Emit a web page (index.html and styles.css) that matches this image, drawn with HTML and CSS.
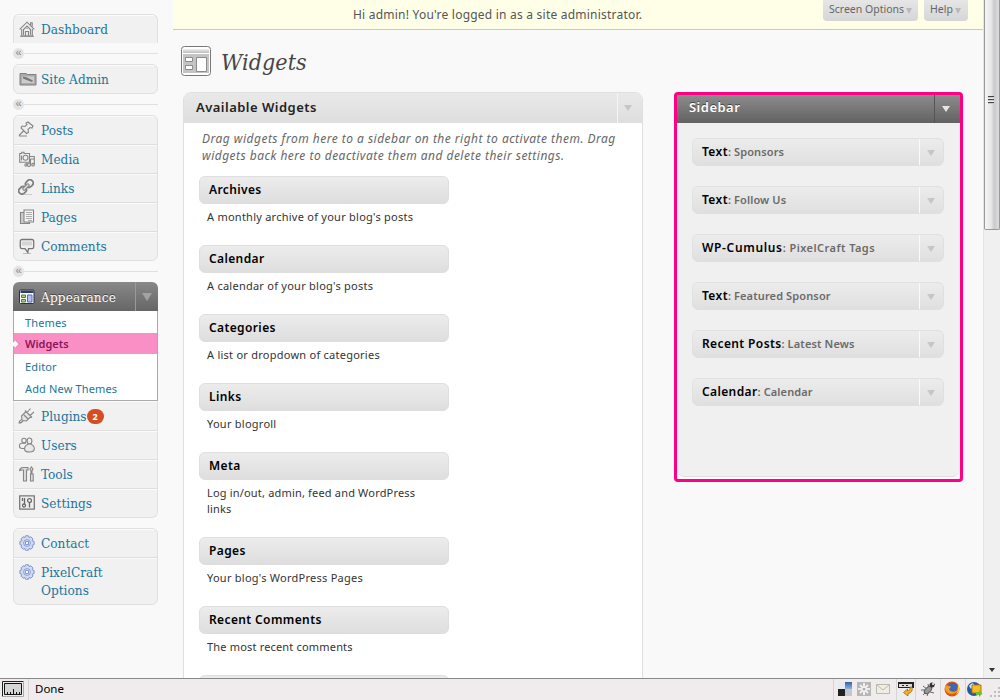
FILE: index.html
```html
<!DOCTYPE html>
<html lang="en">
<head>
<meta charset="utf-8">
<title>Widgets</title>
<link rel="stylesheet" href="styles.css">
</head>
<body>
<div class="window">
  <div class="viewport">
    <nav class="menu">
      <div class="group open-end"><a class="item"><svg class="icon" viewBox="0 0 16 16"><path class="ln" d="M.7 8.3 8 1.2l7.3 7.1M2.7 8v7h10.6V8M11.6 4V1.7h1.6v4M4.5 14V8.5L8 5l3.5 3.5V14"/><path class="ln" d="M6.5 15v-4.5h3V15M8 7v1"/><path class="ln" d="M1 15.2h14"/></svg>Dashboard</a></div>
      <div class="sep"><span>«</span></div>
      <div class="group"><a class="item"><svg class="icon wide" viewBox="0 0 18 16"><path class="pic" d="M1 3.500V2.500h6L8.500 3.500H17v10.500H1z"/><path d="M3 5.500h12v6.500H3z" fill="#ccc"/><path d="m4 5.500 4 1 6 3-1 1.500-4-1.500-5-2z" fill="#777"/></svg>Site Admin</a></div>
      <div class="sep"><span>«</span></div>
      <div class="group">
        <a class="item"><svg class="icon up" viewBox="0 0 16 16"><path class="ln" d="m8 2 2-1 5 4-1 2-2-.5-2 2 .5 3-2 1L3 7l1-2 3 .5 2-2zM5.500 10 1 14.500M1 15h8" fill="#eee"/></svg>Posts</a>
        <a class="item"><svg class="icon" viewBox="0 0 16 16"><path class="ln" d="M.7 2.500h2V1.200H5v1.300h5.500v8.800H.7z"/><circle class="ln" cx="6.500" cy="6.700" r="2.500"/><path class="ln" d="M2.500 4.500v5M10.500 5.500h4.800v8.300M11.500 8h3.500M11.500 8v6M8 12v3"/><circle class="ln" cx="10" cy="14" r="1.500"/><circle class="ln" cx="14" cy="13.700" r="1.300"/><circle class="ln" cx="7" cy="14" r="1.200"/></svg>Media</a>
        <a class="item"><svg class="icon left up" viewBox="0 0 16 16"><g transform="rotate(-45 8 8)"><rect class="link-o" x="-.8" y="4.700" width="8" height="6.500" rx="3.200"/><rect class="link-o" x="8.800" y="4.700" width="8" height="6.500" rx="3.200"/><rect class="ln" x="4" y="6.700" width="8" height="2.600" rx="1.300" fill="#ddd"/></g><path d="M6 15.500h8" stroke="#ccc"/></svg>Links</a>
        <a class="item"><svg class="icon" viewBox="0 0 16 16"><path class="ln" d="M5 3.500H1.500v11h9V12" fill="#ccc"/><path class="ln" d="M5 1h9.500v12H5z" fill="#f6f6f6"/><path d="M7 3.500h6M7 5.500h6M7 7.500h6M7 9.500h6M9 11.500h4" stroke="#aaa"/></svg>Pages</a>
        <a class="item"><svg class="icon" viewBox="0 0 16 16"><path d="M4 15.500h8" stroke="#bbb"/><path d="M3 1.500h10a1.700 1.700 0 0 1 1.700 1.700V9A1.700 1.700 0 0 1 13 10.700H9.500L8.800 14.500 6 10.700H3A1.700 1.700 0 0 1 1.300 9V3.200A1.700 1.700 0 0 1 3 1.500z" fill="#f0f0f0" stroke="#777" stroke-width="1.300"/><path d="M3 3.500h10v4H3z" fill="#d5d5d5"/></svg>Comments</a>
      </div>
      <div class="sep"><span>«</span></div>
      <div class="group tall">
        <a class="item current"><svg class="icon" viewBox="0 0 16 16"><rect x=".5" y="1" width="14.500" height="13.500" rx="1" fill="#fff" stroke="#26304f"/><path d="M1.500 1.500h13V4h-13z" fill="#2f3d66"/><path d="M2.500 6h4v2.500h-4zM2.500 10.500h4V13h-4z" fill="#a6d388" stroke="#4e7a3e"/><path d="M8.500 6h4.500v7H8.500z" fill="#b5c1f2" stroke="#5968ad"/></svg>Appearance<i class="toggle"></i></a>
        <div class="submenu"><a>Themes</a><a class="active">Widgets</a><a>Editor</a><a>Add New Themes</a></div>
        <a class="item after"><svg class="icon left" viewBox="0 0 16 16"><path class="ln" d="M1 15c0-3 2-3 3-3.500L3.500 8 8 3.500l5 5L8.500 13l-3.500-.5C4 15 3 15 1 15zM9 4.500l3.500-4M12 7.500l4-3.500M7 2.500l7 7M6 7l4 4" fill="#e5e5e5"/></svg>Plugins<b class="count">2</b></a>
        <a class="item"><svg class="icon" viewBox="0 0 16 16"><circle class="ln" cx="5" cy="3.500" r="2.200"/><path class="ln" d="M6.500 11.500H3A2.500 2.500 0 0 1 3 6.200h4"/><ellipse class="ln" cx="10.500" cy="4" rx="2.400" ry="3" fill="#eee"/><path class="ln" d="M10.500 7C13 7 15.500 9 15.300 12S12 15 10.500 15s-5 0-5-3S8 7 10.500 7z" fill="#e8e8e8"/></svg>Users</a>
        <a class="item"><svg class="icon" viewBox="0 0 16 16"><path class="ln" d="M.5 4.500C1 2.500 2 1.500 4 1.500h5V4H7.500v11h-3V4H3zM12.500 1 14 3l-1 2v3h-1V5l-1-2zM11.500 8h2.700v7h-2.700z" fill="#ddd"/></svg>Tools</a>
        <a class="item"><svg class="icon" viewBox="0 0 16 16"><path d="M.7.8h14.600v13.400H.7z" fill="#eee" stroke="#777" stroke-width="1.300"/><path d="M5.500 3v6M3.500 3v3M10.500 8v4.500" stroke="#666" stroke-width="1.300"/><circle cx="5" cy="10.500" r="1.500" class="dk"/><circle cx="10.500" cy="5.500" r="1.900" class="dk"/></svg>Settings</a>
      </div>
      <div class="group extra">
        <a class="item"><svg class="icon" viewBox="0 0 16 16"><use href="#gear"/></svg>Contact</a>
        <a class="item two"><svg class="icon" viewBox="0 0 16 16"><g id="gear"><path d="M6.500.8h3l.6 1.700 1.800-.7 2.100 2.100-.8 1.800 1.900.8v3l-1.900.8.8 1.800-2.100 2.100-1.800-.7-.6 1.700h-3l-.6-1.700-1.800.7L2 12.100l.8-1.800-1.900-.8v-3l1.900-.8L2 3.900l2.100-2.100 1.800.7z" fill="#cfdaf5" stroke="#8093c6"/><circle cx="8" cy="8" r="3.400" fill="#dbe4f8" stroke="#8a9bcb"/><path d="M6.500 6.500h3v3h-3z" fill="#fff" stroke="#8496c4"/></g></svg><span>PixelCraft<br>Options</span></a>
      </div>
    </nav>
    <main class="content">
      <header class="banner"><p>Hi admin! You're logged in as a site administrator.</p>
        <div class="tabs"><a class="screen">Screen Options<i></i></a><a class="help">Help<i></i></a></div></header>
      <div class="title"><svg viewBox="0 0 32 32"><defs><linearGradient id="g" x2="0" y2="1"><stop stop-color="#eee"/><stop offset="1" stop-color="#bbb"/></linearGradient></defs><rect x="1.500" y="1.500" width="29" height="29" rx="3" fill="#fff" stroke="#777"/><path d="M3 4h26v4H3z" fill="url(#g)"/><path d="M3 9h26v19H3z" fill="#c4c4c4"/><path d="M5.500 12.500h7v4h-7zM5.500 20.500h7v4h-7zM16.500 12.500h10v14h-10z" fill="#fff" stroke="#8c8c8c"/></svg><h1>Widgets</h1></div>
      <div class="columns">
        <section class="available">
          <h2><span>Available Widgets</span><i class="arrow"></i></h2>
          <p class="hint">Drag widgets from here to a sidebar on the right to activate them. Drag<br>widgets back here to deactivate them and delete their settings.</p>
          <div class="list">
            <h3>Archives</h3><p>A monthly archive of your blog's posts</p>
            <h3>Calendar</h3><p>A calendar of your blog's posts</p>
            <h3>Categories</h3><p>A list or dropdown of categories</p>
            <h3>Links</h3><p>Your blogroll</p>
            <h3>Meta</h3><p>Log in/out, admin, feed and WordPress<br>links</p>
            <h3>Pages</h3><p>Your blog's WordPress Pages</p>
            <h3>Recent Comments</h3><p>The most recent comments</p>
            <h3></h3>
          </div>
        </section>
        <section class="side">
          <h2><span>Sidebar</span><i class="arrow"></i></h2>
          <div class="slots">
            <div class="slot"><span><b>Text</b>: Sponsors</span><i class="arrow"></i></div>
            <div class="slot"><span><b>Text</b>: Follow Us</span><i class="arrow"></i></div>
            <div class="slot loose"><span><b>WP-Cumulus</b>: PixelCraft Tags</span><i class="arrow"></i></div>
            <div class="slot"><span><b>Text</b>: Featured Sponsor</span><i class="arrow"></i></div>
            <div class="slot"><span><b>Recent Posts</b>: Latest News</span><i class="arrow"></i></div>
            <div class="slot"><span><b>Calendar</b>: Calendar</span><i class="arrow"></i></div>
          </div>
        </section>
      </div>
    </main>
    <div class="scrollbar"><div class="thumb"><i></i></div><div class="down"></div></div>
  </div>
  <footer class="status">
    <div class="meter"><svg width="22" height="16" viewBox="0 0 22 16"><path d="M.5 15.500V.5h21" fill="none" stroke="#222"/><path d="M.5 15.500h21V.5" fill="none" stroke="#aaa"/><path d="M2.500 2.500h17v11h-17z" fill="#d4d6d4" stroke="#111"/><path d="M5.500 13v-2M8.500 13v-2M11.500 13V8M14.500 13v-2M17.500 13v-2" stroke="#111"/></svg></div>
    <span class="done">Done</span>
    <div class="tray">
      <div class="cell first"><svg viewBox="0 0 16 16"><defs><linearGradient id="b" x2="0" y2="1"><stop stop-color="#2f62a8"/><stop offset="1" stop-color="#8db4e0"/></linearGradient></defs><path d="M1 1h7v7H1z" fill="#e6eaf1"/><path d="M8 1h7v7H8z" fill="url(#b)"/><path d="M1 8h7v7H1z" fill="#222"/><path d="M8 8h7v7H8z" fill="#c4c8cc"/></svg><svg viewBox="0 0 16 16"><path d="M1 1h14v14H1z" fill="#b7b7b5"/><path d="M8 2v12M2 8h12M4 4l8 8M12 4l-8 8" stroke="#fff" stroke-width="1.600"/><circle cx="8" cy="8" r="1.500" fill="#aaa"/></svg><svg viewBox="0 0 16 16"><path d="M1.500 3.500h13v9h-13z" fill="#eeeee2" stroke="#b9b9ae"/><path d="m2 4 6 5 6-5" fill="none" stroke="#b9b9ae"/></svg></div>
      <div class="cell"><svg viewBox="0 0 16 16"><path d="M0 1h16v6H0z" fill="#222"/><path d="M1 3h13v3H1z" fill="#ddd"/><path d="M4 4h2v1H4zM8 4h2v1H8z" fill="#222"/><path d="M14 6c1 4-1 6-4 6.500V15l-4.500-3.500L9.500 8v2c2 0 2.500-1.500 2.500-4z" fill="#f7b51b" stroke="#8a6010" stroke-width=".7"/></svg></div>
      <div class="cell bug"><svg viewBox="0 0 16 16"><path d="m1 9 5 0M3 14l4-4M7 15l2-5M3 5l4 3M8 3l1 5M10 11l4 1M10 7l5-4" stroke="#666"/><ellipse cx="8" cy="9" rx="4.500" ry="2.500" transform="rotate(-45 8 9)" fill="#999" stroke="#555"/><circle cx="12" cy="4" r="2.500" fill="#333"/><circle cx="13" cy="3" r="1" fill="#fff"/></svg></div>
      <div class="cell fox"><svg viewBox="0 0 16 16"><circle cx="8" cy="8" r="7.500" fill="#d8560f"/><path d="M4 4c2-3 7-3 9 0 1 4-1 7-5 7S4 8 4 4z" fill="#3e68b2"/><path d="M1 4c1 1 4 0 6 2L5 8c1 3 5 4 9 1-2 5-11 6-13-1z" fill="#f49b20"/><path d="M14 3c2 4 2 8-2 11 2-4 2-8 2-11z" fill="#ffd13d"/></svg></div>
      <div class="cell globe"><svg viewBox="0 0 16 16"><circle cx="7" cy="8" r="7" fill="#25589b"/><path d="M2 5c3-4 5-3 5-1L4 8z" fill="#cfe5f6"/><path d="M5 4h9v8H5z" fill="#f5bd20" stroke="#b3770a"/><path d="M9 11h3V9l3.500 3.500L12 16v-2H9z" fill="#72bd38"/></svg></div>
      <div class="grip"><svg viewBox="0 0 16 16"><path d="M9 5h2v2H9zM5 9h2v2H5zM9 9h2v2H9zM1 13h2v2H1zM5 13h2v2H5zM9 13h2v2H9z" fill="#c0bcbc"/></svg></div>
    </div>
  </footer>
</div>
</body>
</html>
```

FILE: styles.css
```css
* { box-sizing: border-box; margin: 0; padding: 0; }
body { width: 1000px; height: 700px; overflow: hidden; background: #f9f9f9; font-family: "Noto Sans", sans-serif; color: #333; }
.window { height: 700px; display: flex; flex-direction: column; }
.viewport { height: 678px; display: flex; overflow: hidden; }
.menu { width: 173px; padding: 14px 15px 0 13px; flex: none; }
.group { border: 1px solid #e0e0e0; border-radius: 6px; background: #f1f1f1; overflow: hidden; }
.open-end { border-bottom: 0; border-radius: 6px 6px 0 0; height: 29px; }
.item { display: flex; align-items: center; position: relative; height: 29px; padding: 0 0 2px 5px; border-bottom: 1px solid #dedede; border-top: 1px solid #fbfbfb; font: 13.5px "DejaVu Serif Condensed", "DejaVu Serif", serif; font-stretch: condensed; color: #21759b; }
.item:last-child { border-bottom: 0; height: 28px; }
.icon { width: 16px; height: 16px; flex: none; margin: 1px 6px 0 0; fill: none; }
.icon.wide { width: 18px; margin-right: 4px; }
.icon.left, .icon.up { margin-left: -1px; margin-right: 7px; }
.icon.up { margin-top: -2px; }
.ln { stroke: #858585; stroke-width: 1.1; }
.pic { fill: #aaa; stroke: #808080; }
.link-o { stroke: #808080; stroke-width: 1.8; }
.dk { stroke: #666; stroke-width: 1.3; fill: #fff; }
.sep { height: 21px; display: flex; align-items: center; }
.sep::after { content: ""; height: 1px; flex: 1; background: #e0e0e0; }
.sep span { width: 11px; height: 11px; border-radius: 6px; background: #e3e3e3; color: #888; font: 11px/9px "Liberation Sans", sans-serif; text-align: center; }
.tall { border: 0; }
.tall .item { border-left: 1px solid #e0e0e0; border-right: 1px solid #e0e0e0; }
.tall .item:last-child { border-bottom: 1px solid #e0e0e0; border-radius: 0 0 6px 6px; height: 29px; }
.tall .item.after { height: 30px; padding-top: 1px; }
.tall .item.current { border: 0; padding: 0 0 0 6px; color: #fff; background: linear-gradient(#888, #666); text-shadow: 0 -1px #444; letter-spacing: .15px; }
.toggle { margin-left: auto; width: 23px; height: 29px; border-left: 1px solid #999; display: grid; place-items: center; }
.toggle::after { content: ""; border: 5px solid transparent; border-top: 8px solid #a2a2a2; border-bottom: 0; }
.submenu { height: 90px; border: 1px solid #aaa; border-top: 0; background: #fff; }
.submenu a { display: block; height: 22px; line-height: 22px; padding-left: 11px; font-size: 11px; color: #21759b; letter-spacing: .15px; }
.submenu a:first-child { line-height: 24px; }
.submenu .active { height: 21px; line-height: 21px; margin-bottom: 2px; background: #fa8fc5; color: #8b155c; font-weight: 600; position: relative; letter-spacing: 0; }
.submenu .active::before { content: ""; position: absolute; left: 0; top: 8px; width: 5px; height: 5px; background: #fbb; border: 1px solid #e070aa; border-width: 1px 1px 0 0; background: #fff; transform: translateX(-1px) rotate(45deg); }
.count { width: 17px; height: 15px; margin: 1px 0 0 0; border-radius: 8px; background: #d54e21; color: #fff; font: bold 9px/15px "Noto Sans", sans-serif; text-align: center; }
.extra { margin-top: 10px; }
.item.two, .item.two:last-child { height: 46px; align-items: flex-start; line-height: 18px; padding-top: 4px; }
.content { width: 810px; flex: none; }
.banner { height: 30px; background: #ffffe8; border-bottom: 1px solid #c9c9bd; display: flex; position: relative; font-size: 12px; color: #555; }
.banner p { padding-left: 180px; line-height: 29px; white-space: nowrap; letter-spacing: .22px; }
.tabs { position: absolute; right: 15px; top: 0; display: flex; gap: 6px; }
.tabs a { height: 21px; background: linear-gradient(#e6e6e6, #d6d6d6); border-radius: 0 0 4px 4px; font-size: 10.5px; line-height: 19px; padding: 0 0 2px 6px; color: #666; display: flex; align-items: center; gap: 2px; white-space: nowrap; }
.tabs .screen { width: 95px; }
.tabs .help { width: 44px; }
.tabs i { margin-top: 2px; border: 3.5px solid transparent; border-top: 6px solid #b9b9b9; border-bottom: 0; }
.title { height: 62px; padding: 15px 0 0 7px; display: flex; }
.title svg { width: 32px; height: 32px; }
h1 { font: italic 23px/34px "DejaVu Serif Condensed", "DejaVu Serif", serif; font-stretch: condensed; color: #464646; margin-left: 9px; letter-spacing: .1px; }
.columns { display: flex; padding-left: 10px; align-items: flex-start; }
.available { width: 460px; height: 620px; border: 1px solid #dfdfdf; border-radius: 8px 8px 0 0; background: #fff; }
h2 { display: flex; font-size: 13px; font-weight: 600; letter-spacing: .47px; }
.available h2 { height: 30px; line-height: 29px; padding-left: 12px; background: linear-gradient(#e9e9e9, #dedede); border-radius: 7px 7px 0 0; color: #222; }
.arrow { margin-left: auto; display: grid; place-items: center; width: 25px; border-left: 1px solid #f5f5f5; }
.arrow::after { content: ""; margin-right: 2px; border: 4px solid transparent; border-top: 6.5px solid #c6c6c6; border-bottom: 0; }
.available h2 .arrow::after { margin-right: 5px; }
.hint { padding: 7px 0 0 18px; font-size: 12px; line-height: 17px; font-style: italic; color: #666; white-space: nowrap; letter-spacing: .48px; }
.list { padding: 12px 0 0 15px; }
h3 { width: 250px; height: 28px; border: 1px solid #dedede; border-radius: 6px; background: linear-gradient(#ececec, #dedede); font-size: 12px; line-height: 26px; font-weight: 600; padding-left: 9px; color: #000; letter-spacing: .38px; }
.list p { margin: 5px 0 20px 8px; font-size: 11px; line-height: 16px; white-space: nowrap; letter-spacing: .25px; }
.list p:nth-of-type(5), .list p:nth-of-type(7) { letter-spacing: .18px; }
.side { width: 289px; height: 390px; margin-left: 31px; border: 3px solid #ff0084; border-radius: 4px; background: #fafafa; }
.side h2 { height: 28px; line-height: 25px; padding-left: 12px; color: #fff; background: linear-gradient(#8c8c8c, #626262); text-shadow: 0 -1px #444; }
.side h2 .arrow { width: 26px; border-left: 1px solid #555; }
.side h2 .arrow::after { border-top-color: #e5e5e5; margin: 0 3px 1px 0; }
.slots { height: 354px; padding: 15px 0 0 15px; display: grid; gap: 20px; align-content: start; background: #f0f0f0; border-bottom: 1px solid #dfdfdf; border-radius: 0 0 8px 8px; }
.slot { width: 252px; height: 28px; display: flex; padding-left: 9px; border: 1px solid #e0e0e0; border-radius: 6px; background: linear-gradient(#ececec, #dfdfdf); font-size: 11px; line-height: 26px; font-weight: 600; color: #6a6a6a; white-space: nowrap; letter-spacing: .12px; }
.slot b { font-size: 12px; font-weight: 600; color: #000; letter-spacing: .38px; }
.slot.loose { letter-spacing: .45px; }
.slot.loose b { letter-spacing: .65px; }
.slot .arrow { width: 24px; border-left: 1px solid #fafafa; }
.slot .arrow::after { margin-top: 2px; }
.scrollbar { width: 17px; background: #f0f0f0; border-left: 1px solid #e5e5e5; display: flex; flex-direction: column; justify-content: space-between; }
.thumb { height: 230px; width: 16px; border: 1px solid #999; border-top: 0; border-radius: 0 0 2px 2px; background: linear-gradient(90deg, #f5f5f5, #e6e6e8 45%, #cacace 65%, #ddd); padding: 96px 0 0 3px; }
.thumb i { display: block; width: 6px; height: 8px; background: repeating-linear-gradient(#444 0 1px, #ccc 1px 2px, #eee 2px 3px); }
.down { width: 0; margin: 0 0 6px 5px; border: 3.5px solid transparent; border-top: 4px solid #333; border-bottom: 0; }
.status { height: 22px; border-top: 1px solid #888; background: #f0eced; display: flex; font-size: 12px; color: #000; }
.meter { width: 29px; padding: 2px 0 0 2px; border-right: 1px solid #d8d4d4; }
.done { padding-left: 6px; line-height: 20px; font-size: 11.5px; }
.tray { margin-left: auto; display: flex; }
.tray svg { width: 16px; height: 16px; flex: none; }
.cell { width: 25px; padding: 2px 0 0 4px; border-left: 1px solid #d8d4d4; }
.cell.first { width: 63px; display: flex; gap: 3px; padding-left: 3px; }
.cell:nth-child(2) { width: 19px; padding-left: 1px; }
.cell.fox { padding-left: 3px; }
.cell.globe { width: 19px; padding-left: 1px; }
.grip { width: 16px; padding: 3px 0 0 5px; overflow: hidden; }
```
